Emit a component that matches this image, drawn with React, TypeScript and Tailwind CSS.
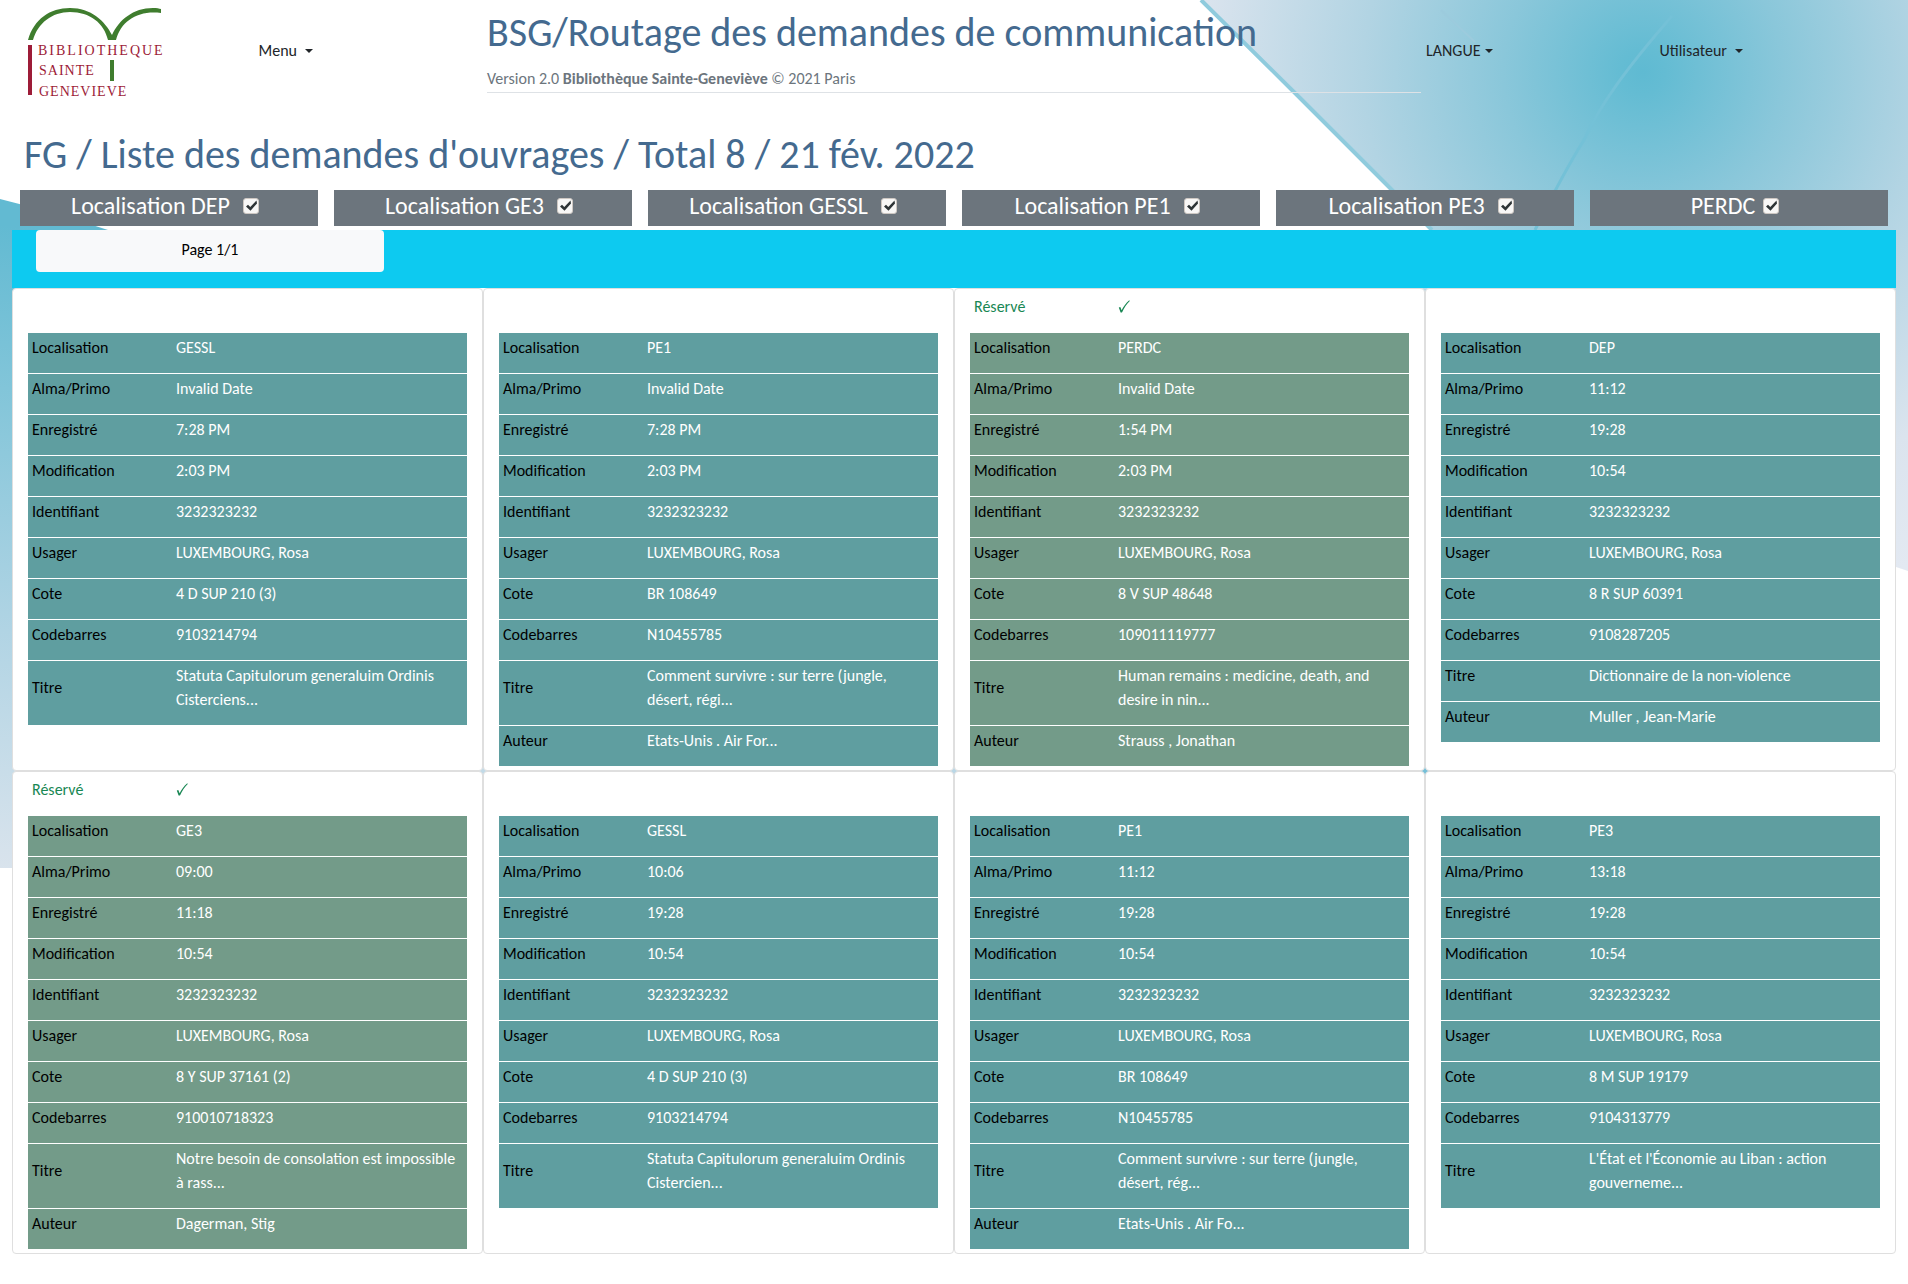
import React from "react";

type Row = [string, string];
type Loan = { reserved: boolean; rows: Row[] };

const FIELDS = [
  "Localisation",
  "Alma/Primo",
  "Enregistré",
  "Modification",
  "Identifiant",
  "Usager",
  "Cote",
  "Codebarres",
  "Titre",
  "Auteur",
];

function loan(reserved: boolean, ...values: string[]): Loan {
  return { reserved, rows: values.map((v, i) => [FIELDS[i], v] as Row) };
}

const ID = "3232323232";
const USER = "LUXEMBOURG, Rosa";

const LOANS: Loan[] = [
  loan(false, "GESSL", "Invalid Date", "7:28 PM", "2:03 PM", ID, USER, "4 D SUP 210 (3)", "9103214794", "Statuta Capitulorum generaluim Ordinis Cisterciens..."),
  loan(false, "PE1", "Invalid Date", "7:28 PM", "2:03 PM", ID, USER, "BR 108649", "N10455785", "Comment survivre : sur terre (jungle, désert, régi...", "Etats-Unis . Air For..."),
  loan(true, "PERDC", "Invalid Date", "1:54 PM", "2:03 PM", ID, USER, "8 V SUP 48648", "109011119777", "Human remains : medicine, death, and desire in nin...", "Strauss , Jonathan"),
  loan(false, "DEP", "11:12", "19:28", "10:54", ID, USER, "8 R SUP 60391", "9108287205", "Dictionnaire de la non-violence", "Muller , Jean-Marie"),
  loan(true, "GE3", "09:00", "11:18", "10:54", ID, USER, "8 Y SUP 37161 (2)", "910010718323", "Notre besoin de consolation est impossible à rass...", "Dagerman, Stig"),
  loan(false, "GESSL", "10:06", "19:28", "10:54", ID, USER, "4 D SUP 210 (3)", "9103214794", "Statuta Capitulorum generaluim Ordinis Cistercien..."),
  loan(false, "PE1", "11:12", "19:28", "10:54", ID, USER, "BR 108649", "N10455785", "Comment survivre : sur terre (jungle, désert, rég...", "Etats-Unis . Air Fo..."),
  loan(false, "PE3", "13:18", "19:28", "10:54", ID, USER, "8 M SUP 19179", "9104313779", "L'État et l'Économie au Liban : action gouverneme..."),
];

const LOCATIONS = [
  { label: "Localisation DEP", wide: true },
  { label: "Localisation GE3", wide: true },
  { label: "Localisation GESSL", wide: true },
  { label: "Localisation PE1", wide: true },
  { label: "Localisation PE3", wide: true },
  { label: "PERDC", wide: false },
];

function Backdrop() {
  return (
    <svg
      className="absolute left-0 top-0 -z-10 w-full"
      viewBox="0 0 1908 1284"
      aria-hidden="true"
    >
      <defs>
        <radialGradient id="glow" gradientUnits="userSpaceOnUse" cx="1643" cy="72" r="560">
          <stop offset="0" stopColor="#5fbad2" />
          <stop offset="0.04" stopColor="#64bcd3" />
          <stop offset="0.25" stopColor="#8ac7da" />
          <stop offset="0.5" stopColor="#b2d4e3" />
          <stop offset="0.8" stopColor="#dbe4ee" />
          <stop offset="1" stopColor="#e3e9f2" />
        </radialGradient>
        <linearGradient id="wave" gradientUnits="userSpaceOnUse" x1="60" y1="230" x2="0" y2="880">
          <stop offset="0" stopColor="#62bad2" />
          <stop offset="0.25" stopColor="#82c5d9" />
          <stop offset="0.62" stopColor="#b1d4e4" />
          <stop offset="1" stopColor="#dbe4ed" />
        </linearGradient>
      </defs>
      <path d="M0 199 Q60 214 108 230 L1000 600 L1000 868 L0 868 Z" fill="url(#wave)" />
      <path d="M1201 0 L1908 0 L1908 571 L1896 567 L1500 700 L1300 500 L1432 230 Z" fill="url(#glow)" />
      <circle cx="1424" cy="771" r="8" fill="#74bfd8" />
      <path d="M1201 0 L1300 98 L1432 230" fill="none" stroke="#8fcbdd" strokeWidth="4" />
      <path d="M1672 16 C1625 70 1600 105 1584 140 C1565 170 1550 200 1535 230" fill="none" stroke="#74c1d7" strokeWidth="3" />
      <path d="M1441 10 L1475 42" fill="none" stroke="#9ccbdd" strokeWidth="2" />
    </svg>
  );
}

function Logo() {
  return (
    <svg className="h-[100px] w-[148px]" viewBox="24 4 148 100" role="img" aria-label="Bibliothèque Sainte-Geneviève">
      <path
        d="M28 40 C34 19 50 8 70 8 C91 8 105 21 112 35 C119 20 133 8 153 8 C157 8 159 8.500 161 9 V13 C138 10 121 21 116 40 H108 C104 23 90 12 70 12 C52 12 38 23 33 40 Z"
        fill="#3f7d2e"
      />
      <rect x="28" y="45" width="4" height="50" fill="#9d1c38" />
      <rect x="110" y="60" width="4" height="21" fill="#3f7d2e" />
      <g className="font-['Liberation_Serif',serif] text-[14px] tracking-[2px]" fill="#9d1c38">
        <text x="38" y="55">BIBLIOTHEQUE</text>
        <text className="tracking-[1px]" x="39" y="75">SAINTE</text>
        <text className="tracking-[1px]" x="39" y="96">GENEVIEVE</text>
      </g>
    </svg>
  );
}

function Dropdown({ label, tight = false }: { label: string; tight?: boolean }) {
  return (
    <button
      type="button"
      className={"flex items-center px-[5px] leading-6 text-[#212529] " + (tight ? "gap-[5px]" : "gap-2")}
    >
      {label}
      <svg className="h-1 w-2" viewBox="0 0 8 4" aria-hidden="true">
        <path d="M0 0 H8 L4 4 Z" fill="currentColor" />
      </svg>
    </button>
  );
}

function LocationToggle({ label, wide }: { label: string; wide: boolean }) {
  return (
    <label
      className={
        "flex h-9 items-center justify-center bg-[#6c757d] pr-2 pb-1 text-2xl leading-8 text-white " +
        (wide ? "gap-[13px]" : "gap-2")
      }
    >
      {label}
      <span className="grid size-4">
        <input
          type="checkbox"
          defaultChecked
          className="peer col-start-1 row-start-1 size-4 appearance-none rounded-[3px] border border-[#cdc7c2] bg-[#f8f7f6]"
        />
        <svg
          className="pointer-events-none col-start-1 row-start-1 hidden size-4 peer-checked:block"
          viewBox="0 0 16 16"
          aria-hidden="true"
        >
          <path d="M3 8.500 L5 6.700 L7.300 9 L13.500 2.500 L14 5.500 L7.500 12.800 Z" fill="#2e3436" />
        </svg>
      </span>
    </label>
  );
}

function Tick() {
  return (
    <svg className="h-6 w-3" viewBox="0 0 12 24" role="img" aria-label="Oui">
      <path d="M0.800 12.500 L2.300 12 L3.600 15.200 C5.500 11.500 8 8 11 5.500 L12 5.800 C8.800 9 6 13 4 17.500 L2.600 17.500 Z" fill="currentColor" />
    </svg>
  );
}

function LoanCard({ reserved, rows }: Loan) {
  const tone = reserved ? "bg-[#739b89]" : "bg-[#5f9ea0]";
  return (
    <article className="rounded-[4px] border border-[#dfdfdf] bg-white px-[15px] py-[3px]">
      <table className="w-full table-fixed border-collapse">
        <colgroup>
          <col className="w-36" />
          <col />
        </colgroup>
        <tbody>
          <tr className="h-[41px] align-top text-[#198754]">
            <th scope="row" className="px-1 pt-[3px] text-left font-normal">{reserved ? "Réservé" : ""}</th>
            <td className="px-1 pt-[3px]">{reserved ? <Tick /> : null}</td>
          </tr>
          {rows.map(([name, value]) => (
            <tr key={name} className={"border-b border-white " + tone}>
              <th scope="row" className="px-1 pt-[3px] pb-[13px] text-left align-middle font-normal text-black">{name}</th>
              <td className="px-1 pt-[3px] pb-[13px] align-middle text-white">{value}</td>
            </tr>
          ))}
        </tbody>
      </table>
    </article>
  );
}

export default function App() {
  return (
    <div className="relative isolate min-h-screen bg-white pb-[30px] font-[Carlito,Calibri,Lato,sans-serif] text-base leading-6">
      <Backdrop />
      <header className="grid h-[93px] grid-cols-8 items-start px-5">
        <div className="pt-1 pl-1">
          <Logo />
        </div>
        <div className="pt-[39px]">
          <Dropdown label="Menu" />
        </div>
        <div className="col-span-4 border-b border-[#dee2e6] pt-[9px]">
          <h1 className="text-[40px] leading-[48px] whitespace-nowrap text-[#446a8f]">
            BSG/Routage des demandes de communication
          </h1>
          <p className="pt-[10px] pb-px text-[#6c757d]">
            Version 2.0 <strong className="font-bold">Bibliothèque Sainte-Geneviève</strong> © 2021 Paris
          </p>
        </div>
        <div className="pt-[39px]">
          <Dropdown label="LANGUE" tight />
        </div>
        <div className="pt-[39px]">
          <Dropdown label="Utilisateur" />
        </div>
      </header>
      <main>
        <h2 className="px-6 pt-[38px] text-[40px] leading-[48px] text-[#446a8f]">
          FG / Liste des demandes d'ouvrages / Total 8 / 21 fév. 2022
        </h2>
        <div className="grid grid-cols-6 gap-4 px-5 pt-[11px] pb-1">
          {LOCATIONS.map((l) => (
            <LocationToggle key={l.label} label={l.label} wide={l.wide} />
          ))}
        </div>
        <div className="mx-3">
          <nav className="bg-[#0dcaf0] px-6 pb-4">
            <button type="button" className="block h-[42px] w-[348px] rounded-[4px] bg-[#f8f9fa] pb-[2px] text-black">
              Page 1/1
            </button>
          </nav>
          <section className="grid grid-cols-4">
            {LOANS.map((l, i) => (
              <LoanCard key={i} {...l} />
            ))}
          </section>
        </div>
      </main>
    </div>
  );
}
